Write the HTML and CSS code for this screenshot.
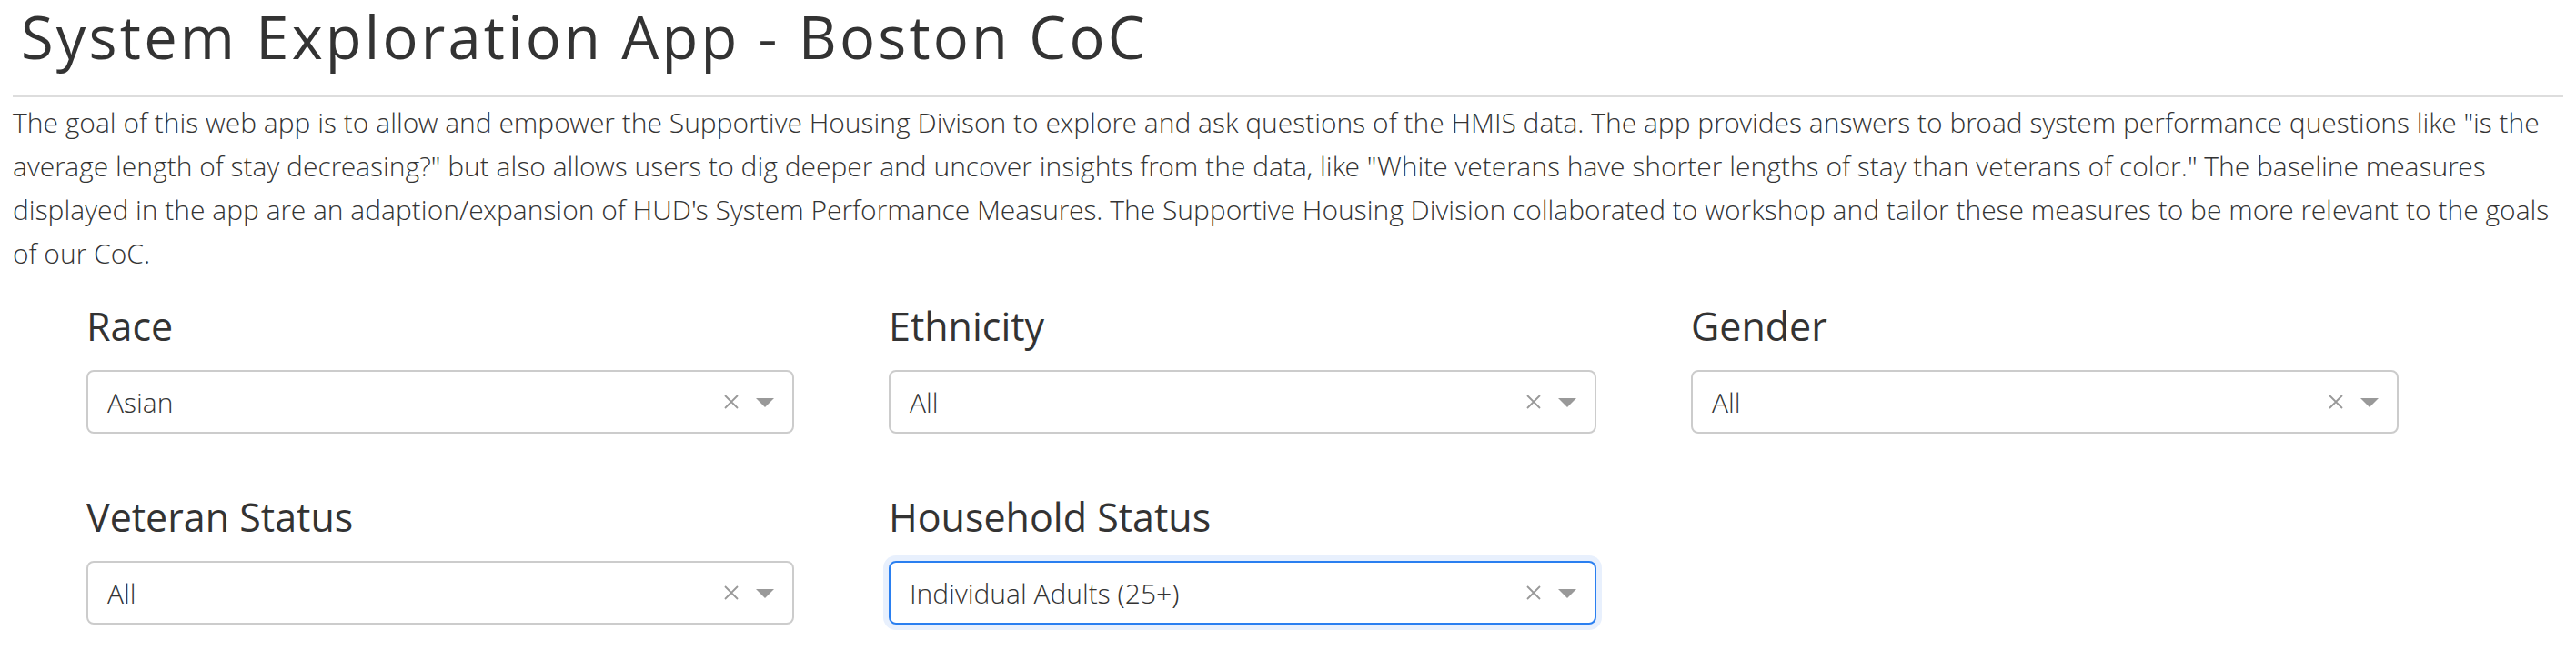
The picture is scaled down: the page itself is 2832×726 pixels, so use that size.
FILE: index.html
```html
<!DOCTYPE html>
<html>
<head>
<meta charset="utf-8">
<link rel="stylesheet" href="styles.css">
</head>
<body>
<div class="page">
  <h2 class="title">System Exploration App - Boston CoC</h2>
  <hr class="rule">
  <p class="intro">The goal of this web app is to allow and empower the Supportive Housing Divison to explore and ask questions of the HMIS data. The app provides answers to broad system performance questions like "is the average length of stay decreasing?" but also allows users to dig deeper and uncover insights from the data, like "White veterans have shorter lengths of stay than veterans of color." The baseline measures displayed in the app are an adaption/expansion of HUD's System Performance Measures. The Supportive Housing Division collaborated to workshop and tailor these measures to be more relevant to the goals of our CoC.</p>
  <div class="filters">
    <div class="filter">
      <label class="flabel">Race</label>
      <div class="select"><span class="value">Asian</span><span class="clear"><svg width="16" height="16" viewBox="0 0 16 16"><path d="M1 1L15 15M15 1L1 15" stroke="#999" stroke-width="1.8" fill="none"/></svg></span><span class="caret"></span></div>
    </div>
    <div class="filter">
      <label class="flabel">Ethnicity</label>
      <div class="select"><span class="value">All</span><span class="clear"><svg width="16" height="16" viewBox="0 0 16 16"><path d="M1 1L15 15M15 1L1 15" stroke="#999" stroke-width="1.8" fill="none"/></svg></span><span class="caret"></span></div>
    </div>
    <div class="filter">
      <label class="flabel">Gender</label>
      <div class="select"><span class="value">All</span><span class="clear"><svg width="16" height="16" viewBox="0 0 16 16"><path d="M1 1L15 15M15 1L1 15" stroke="#999" stroke-width="1.8" fill="none"/></svg></span><span class="caret"></span></div>
    </div>
    <div class="filter">
      <label class="flabel">Veteran Status</label>
      <div class="select"><span class="value">All</span><span class="clear"><svg width="16" height="16" viewBox="0 0 16 16"><path d="M1 1L15 15M15 1L1 15" stroke="#999" stroke-width="1.8" fill="none"/></svg></span><span class="caret"></span></div>
    </div>
    <div class="filter">
      <label class="flabel">Household Status</label>
      <div class="select focused"><span class="value">Individual Adults (25+)</span><span class="clear"><svg width="16" height="16" viewBox="0 0 16 16"><path d="M1 1L15 15M15 1L1 15" stroke="#999" stroke-width="1.8" fill="none"/></svg></span><span class="caret"></span></div>
    </div>
  </div>
</div>
</body>
</html>
```

FILE: styles.css
```css
html, body {
  margin: 0;
  padding: 0;
  background: #fff;
}
.page {
  padding: 0 14px;
  color: #333;
}
.title {
  font-family: "Open Sans", sans-serif;
  font-weight: 400;
  font-size: 65px;
  letter-spacing: 3.2px;
  line-height: 80px;
  margin: 0;
  padding: 0 0 0 9px;
  color: #333;
}
.rule {
  border: 0;
  border-top: 2px solid #ddd;
  margin: 25px 0 0 0;
}
.intro {
  font-family: "Open Sans Light", "Open Sans", sans-serif;
  font-weight: 300;
  font-size: 30px;
  line-height: 48px;
  margin: 4px 0 0 0;
  color: #333;
}
.filters {
  display: grid;
  grid-template-columns: repeat(3, 778px);
  column-gap: 104px;
  row-gap: 0;
  padding-left: 81px;
  margin-top: 22px;
}
.filter {
  display: flex;
  flex-direction: column;
  height: 210px;
}
.flabel {
  font-family: "Open Sans", sans-serif;
  font-size: 43px;
  line-height: 60px;
  color: #333;
  margin-top: 4px;
}
.select {
  margin-top: 18px;
  height: 70px;
  box-sizing: border-box;
  border: 2px solid #ccc;
  border-radius: 8px;
  display: flex;
  align-items: center;
  padding: 0 20px 0 21px;
  font-family: "Open Sans Light", "Open Sans", sans-serif;
  font-weight: 300;
  font-size: 30px;
  color: #333;
  background: #fff;
}
.select.focused {
  border-color: #2a7ff0;
  box-shadow: 0 0 0 6px #e8f0fd;
}
.value {
  flex: 1;
}
.clear {
  display: flex;
  width: 16px;
  height: 16px;
  margin-right: 19px;
}
.caret {
  width: 0;
  height: 0;
  border-left: 10px solid transparent;
  border-right: 10px solid transparent;
  border-top: 10px solid #999;
  margin-top: 2px;
}
```
